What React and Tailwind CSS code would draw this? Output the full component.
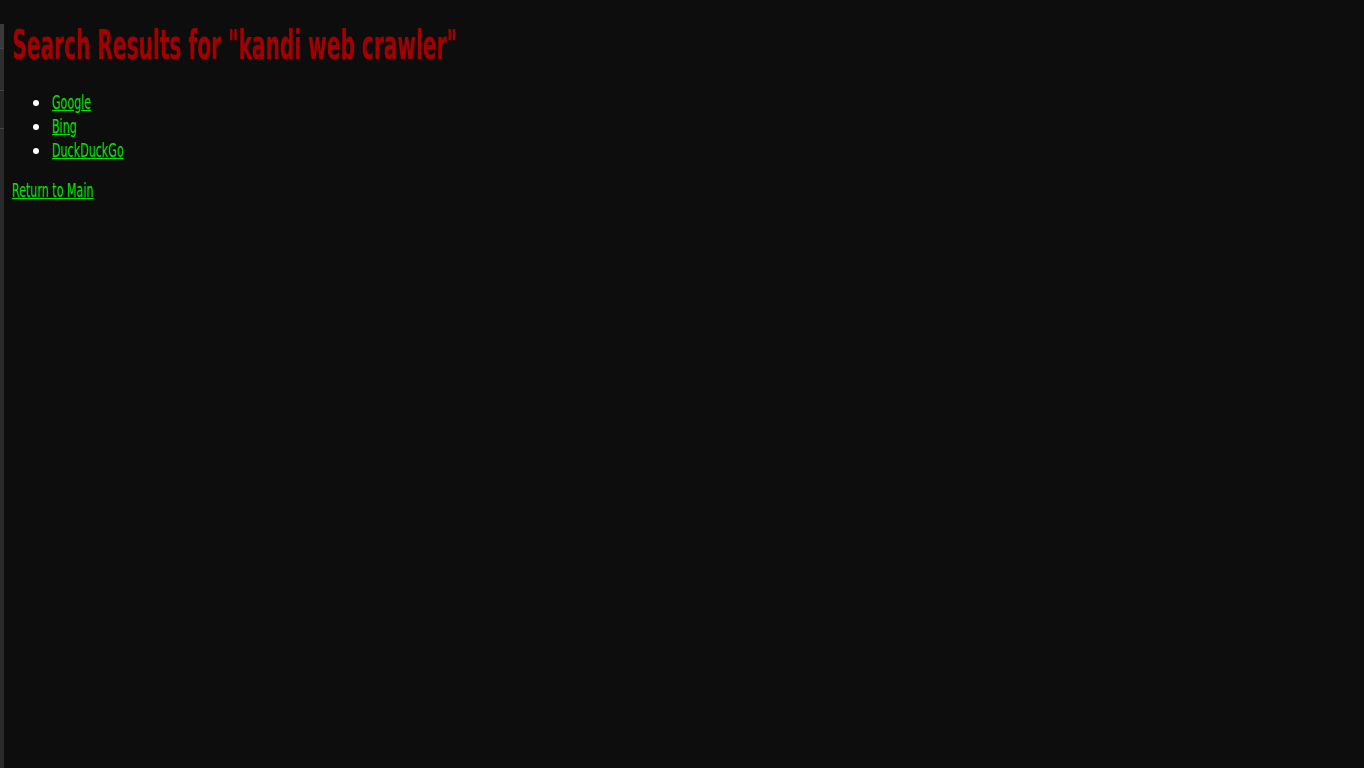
import React from 'react';

const links = ['Google', 'Bing', 'DuckDuckGo'];

export default function App() {
  return (
    <div className="min-h-screen bg-[#0d0d0d] flex" style={{ fontFamily: '"DejaVu Sans Condensed", "Liberation Sans", sans-serif' }}>
      {/* left strip */}
      <div className="w-[4px] shrink-0 flex flex-col pt-[24px]">
        <div className="h-[24px] bg-[#3a3a3a]" />
        <div className="h-[42px] bg-[#2e2e2e] border-t border-[#444]" />
        <div className="h-[38px] bg-[#262626] border-t border-[#444]" />
        <div className="flex-1 bg-[#2a2a2a] border-t border-[#444]" />
      </div>

      <div className="flex-1 px-[8px]">
        <h1 className="text-[40px] leading-[40px] font-bold text-[#a00000] mt-[25px] mb-[25px] origin-left scale-x-[0.56] whitespace-nowrap">
          Search Results for "kandi web crawler"
        </h1>
        <ul className="list-disc pl-[40px] text-[#00e600] text-[19px] leading-[24px] marker:text-white">
          {links.map((l) => (
            <li key={l}>
              <a href="#" className="inline-block underline origin-left scale-x-[0.65]">{l}</a>
            </li>
          ))}
        </ul>
        <a href="#" className="block mt-[16px] text-[#00e600] text-[19px] leading-[24px] underline w-fit origin-left scale-x-[0.65]">
          Return to Main
        </a>
      </div>
    </div>
  );
}
